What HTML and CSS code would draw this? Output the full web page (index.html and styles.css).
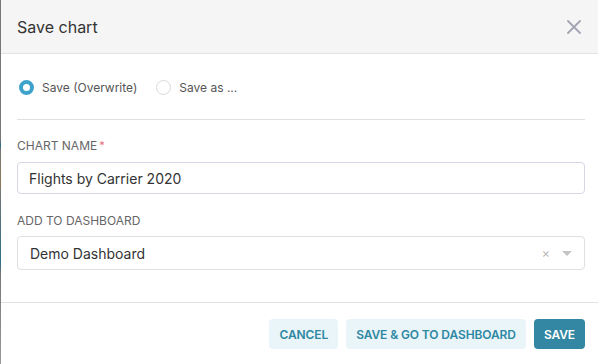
FILE: index.html
```html
<!DOCTYPE html>
<html lang="en">
<head>
    <meta charset="UTF-8">
    <title>Save chart</title>
    <link rel="stylesheet" href="styles.css">
</head>
<body>
    <div class="backdrop-edge"></div>
    <div class="modal">
        <div class="modal-header">
            <h4 class="modal-title">Save chart</h4>
            <button class="close-btn" aria-label="Close">
                <svg width="14" height="14" viewBox="0 0 14 14">
                    <path d="M1 1 L13 13 M13 1 L1 13" stroke="#a3a3b4" stroke-width="1.8" stroke-linecap="round"/>
                </svg>
            </button>
        </div>
        <div class="modal-body">
            <div class="radio-row">
                <label class="radio checked"><span class="radio-dot"></span>Save (Overwrite)</label>
                <label class="radio"><span class="radio-dot"></span>Save as ...</label>
            </div>
            <hr class="divider">
            <div class="field">
                <div class="field-label">Chart name<span class="required">*</span></div>
                <input class="text-input" type="text" value="Flights by Carrier 2020">
            </div>
            <div class="field">
                <div class="field-label">Add to dashboard</div>
                <div class="select">
                    <span class="select-value">Demo Dashboard</span>
                    <span class="select-clear">×</span>
                    <span class="select-arrow"></span>
                </div>
            </div>
        </div>
        <div class="modal-footer">
            <button class="btn">Cancel</button>
            <button class="btn">Save &amp; go to dashboard</button>
            <button class="btn btn-primary">Save</button>
        </div>
    </div>
</body>
</html>
```

FILE: styles.css
```css
html, body {
    margin: 0;
    height: 100%;
    overflow: hidden;
}
body {
    font-family: 'Inter', 'Liberation Sans', sans-serif;
    display: flex;
    background-color: #fff;
    color: #333;
}
.backdrop-edge {
    width: 1px;
    flex-shrink: 0;
    background: linear-gradient(to bottom, #777 0, #777 140px, #2d6f86 145px, #777 150px, #8a7a55 185px, #777 190px, #2d6f86 262px, #777 275px, #999 100%);
}
.modal {
    flex: 1;
    display: flex;
    flex-direction: column;
    background-color: #fff;
}
.modal-header {
    height: 53px;
    display: flex;
    align-items: center;
    justify-content: space-between;
    padding: 0 16px;
    background-color: #f5f5f5;
    border-bottom: 1px solid #e3e3e3;
}
.modal-title {
    margin: 0;
    font-size: 16px;
    font-weight: 400;
    color: #333;
}
.close-btn {
    border: none;
    background: none;
    padding: 0;
    margin-right: 1px;
    display: flex;
    cursor: pointer;
}
.modal-body {
    padding: 25px 13px 0 16px;
}
.radio-row {
    display: flex;
    align-items: center;
    gap: 19px;
    height: 16px;
    margin-left: 2px;
}
.radio {
    display: flex;
    align-items: center;
    gap: 8px;
    font-size: 12px;
    color: #555;
}
.radio-dot {
    width: 15px;
    height: 15px;
    box-sizing: border-box;
    border-radius: 50%;
    border: 1.5px solid #d9d9d9;
    background-color: #fff;
}
.radio.checked .radio-dot {
    border: 4.5px solid #3ea3cb;
}
.divider {
    border: none;
    border-top: 1px solid #e0e0e0;
    margin: 24px 0 18px 0;
}
.field {
    margin-bottom: 19px;
}
.field-label {
    font-size: 12px;
    line-height: 16px;
    height: 16px;
    color: #666;
    text-transform: uppercase;
    margin-bottom: 8px;
}
.required {
    color: #e8707e;
    font-size: 11px;
    line-height: 0;
    vertical-align: 1px;
    margin-left: 2px;
}
.text-input {
    display: block;
    width: 100%;
    box-sizing: border-box;
    height: 32px;
    border: 1px solid #d8d6e6;
    border-radius: 4px;
    padding: 0 11px;
    font-family: inherit;
    font-size: 14px;
    color: #333;
    outline: none;
}
.select {
    display: flex;
    align-items: center;
    height: 34px;
    box-sizing: border-box;
    border: 1px solid #e0e0e0;
    border-radius: 4px;
    padding: 0 12px;
    font-size: 14px;
    margin-top: -1px;
}
.select-value {
    flex: 1;
}
.select-clear {
    color: #bbb;
    font-size: 13px;
    margin-right: 12px;
}
.select-arrow {
    width: 0;
    height: 0;
    border-left: 5px solid transparent;
    border-right: 5px solid transparent;
    border-top: 5px solid #c4c4c4;
}
.modal-footer {
    margin-top: 13px;
    border-top: 1px solid #e0e0e0;
    padding: 16px 13px 0 16px;
    display: flex;
    justify-content: flex-end;
    gap: 8px;
}
.btn {
    height: 30px;
    padding: 0 10px;
    border: none;
    border-radius: 4px;
    background-color: #e9f5f9;
    color: #2e87a3;
    font-family: inherit;
    font-size: 12px;
    font-weight: 600;
    letter-spacing: -0.1px;
    text-transform: uppercase;
    cursor: pointer;
}
.btn-primary {
    background-color: #3487a2;
    color: #fff;
}
```
